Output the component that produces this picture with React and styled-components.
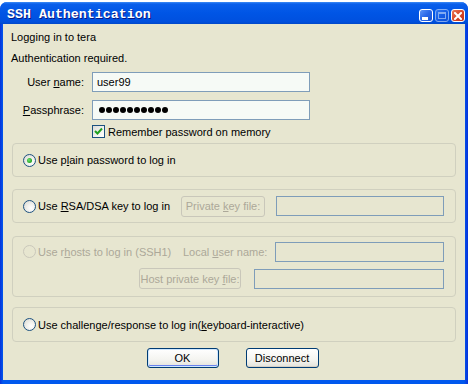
import React from 'react';
import styled, { createGlobalStyle } from 'styled-components';

const GlobalStyle = createGlobalStyle`
  html, body {
    margin: 0;
    padding: 0;
    background: #ffffff;
  }
  body {
    font-family: "Liberation Sans", Arial, sans-serif;
    font-size: 11px;
    color: #000;
  }
`;

const FACE = '#E7E6D0';
const DISABLED = '#ACA899';

const Window = styled.div`
  width: 468px;
  height: 382px;
  margin-top: 2px;
  box-sizing: border-box;
  display: flex;
  flex-direction: column;
  background: linear-gradient(to right, #0831D9 0, #0058EE 3px, #0058EE 464px, #0831D9 468px);
  border-radius: 7px 7px 0 0;
  overflow: hidden;
`;

const TitleBar = styled.div`
  height: 22px;
  flex: none;
  display: flex;
  align-items: flex-start;
  justify-content: space-between;
  padding: 0 3px 0 7px;
  background: linear-gradient(to bottom, #3D8CF5 0, #0A5FEB 2px, #0055E5 50%, #0050DE 90%, #0148C8 100%);
`;

const Title = styled.div`
  font-family: "Liberation Mono", "DejaVu Sans Mono", monospace;
  font-weight: bold;
  font-size: 13.3px;
  line-height: 16px;
  padding-top: 5px;
  color: #fff;
  text-shadow: 1px 1px 0 #0A1883;
`;

const Controls = styled.div`
  display: flex;
  gap: 2px;
  padding-top: 7px;
`;

const CapButton = styled.div`
  width: 14px;
  height: 13px;
  box-sizing: border-box;
  border: 1px solid #fff;
  border-radius: 3px;
  background: ${p => p.$close
    ? 'linear-gradient(135deg, #E97A5B 0%, #D8482A 50%, #C0341C 100%)'
    : 'linear-gradient(135deg, #5C93F8 0%, #2866E8 50%, #1B52D0 100%)'};
  opacity: ${p => (p.$disabled ? 0.5 : 1)};
  display: flex;
  align-items: center;
  justify-content: center;
`;

const Body = styled.div`
  flex: 1;
  margin: 0 3px 4px 3px;
  background: ${FACE};
  display: flex;
  flex-direction: column;
`;

const Line = styled.div`
  height: 18px;
  line-height: 18px;
  padding-left: 8px;
  margin-top: ${p => p.$top}px;
`;

const FieldRow = styled.div`
  display: flex;
  align-items: center;
  height: 20px;
  margin-top: ${p => p.$top}px;
`;

const FieldLabel = styled.div`
  width: 81px;
  margin-right: 8px;
  text-align: right;
`;

const TextBox = styled.div`
  box-sizing: border-box;
  height: 20px;
  width: ${p => (p.$w ? `${p.$w}px` : 'auto')};
  flex: ${p => (p.$w ? 'none' : '1')};
  border: 1px solid #7F9DB9;
  background: ${p => (p.$disabled ? 'transparent' : '#F6FAF6')};
  padding-left: 4px;
  line-height: 18px;
  display: flex;
  align-items: center;
`;

const Dots = styled.div`
  display: flex;
  gap: 1px;
  padding-left: 2px;
`;

const Dot = styled.span`
  width: 6px;
  height: 6px;
  border-radius: 50%;
  background: #000;
`;

const CheckRow = styled.div`
  display: flex;
  align-items: center;
  height: 13px;
  margin: 5px 0 0 89px;
  gap: 3px;
`;

const CheckBox = styled.div`
  width: 13px;
  height: 13px;
  box-sizing: border-box;
  border: 1px solid #1C5180;
  background: linear-gradient(135deg, #DCDCD7 0%, #F5F5F1 60%, #ffffff 100%);
  display: flex;
  align-items: center;
  justify-content: center;
`;

const Group = styled.div`
  box-sizing: border-box;
  margin: ${p => p.$top}px 9px 0 9px;
  height: ${p => p.$h}px;
  border: 1px solid #D0D0BF;
  border-radius: 4px;
  padding: 0 11px 0 10px;
  display: flex;
  align-items: center;
`;

const StackGroup = styled(Group)`
  flex-direction: column;
  align-items: stretch;
  justify-content: flex-start;
  padding-top: 4px;
  gap: 6px;
`;

const GroupRow = styled.div`
  display: flex;
  align-items: center;
  justify-content: ${p => (p.$end ? 'flex-end' : 'flex-start')};
  height: 21px;
  gap: ${p => p.$gap || 0}px;
  width: 100%;
`;

const Option = styled.div`
  display: flex;
  align-items: center;
  gap: 2px;
  width: ${p => (p.$w ? `${p.$w}px` : 'auto')};
  flex: none;
  color: ${p => (p.$disabled ? DISABLED : '#000')};
`;

const Radio = styled.div`
  width: 13px;
  height: 13px;
  box-sizing: border-box;
  border-radius: 50%;
  border: 1px solid ${p => (p.$disabled ? '#CAC8BB' : '#1C5180')};
  background: ${p => (p.$disabled
    ? 'transparent'
    : 'radial-gradient(circle at 65% 65%, #ffffff 0%, #F1F1ED 40%, #D4D4CC 100%)')};
  display: flex;
  align-items: center;
  justify-content: center;
  flex: none;
`;

const RadioDot = styled.div`
  width: 5px;
  height: 5px;
  border-radius: 50%;
  background: radial-gradient(circle at 40% 40%, #6EE66E 0%, #21A121 70%);
`;

const Caption = styled.div`
  width: ${p => p.$w}px;
  flex: none;
  color: ${DISABLED};
`;

const Spacer = styled.span`
  width: ${p => p.$w}px;
  flex: none;
`;

const FlatButton = styled.div`
  box-sizing: border-box;
  width: ${p => p.$w}px;
  height: 21px;
  flex: none;
  border: 1px solid #C9C7BA;
  border-radius: 3px;
  color: ${DISABLED};
  display: flex;
  align-items: center;
  justify-content: center;
  white-space: nowrap;
  overflow: hidden;
`;

const ButtonRow = styled.div`
  display: flex;
  justify-content: center;
  gap: 27px;
  margin-top: 6px;
  margin-left: -3px;
`;

const PushButton = styled.div`
  box-sizing: border-box;
  width: ${p => p.$w}px;
  height: 20px;
  border: 1px solid #003C74;
  border-radius: 3px;
  background: linear-gradient(to bottom, #ffffff 0%, #F4F4F0 60%, #E3E2DA 100%);
  box-shadow: ${p => (p.$default
    ? 'inset 0 0 0 1px #CEE7FF, inset 0 -1px 0 1px #6982EE'
    : 'inset 0 -1px 0 #D6D0C5')};
  display: flex;
  align-items: center;
  justify-content: center;
`;

const Ul = styled.span`
  text-decoration: underline;
  text-underline-offset: 1px;
`;

export default function App() {
  return (
    <>
      <GlobalStyle />
      <Window>
        <TitleBar>
          <Title>SSH Authentication</Title>
          <Controls>
            <CapButton>
              <svg width="6" height="3" viewBox="0 0 6 3" style={{ marginTop: 5, marginRight: 2 }}>
                <rect width="6" height="3" fill="#fff" />
              </svg>
            </CapButton>
            <CapButton $disabled>
              <svg width="8" height="7" viewBox="0 0 8 7">
                <rect x="0.5" y="0.5" width="7" height="6" fill="none" stroke="#fff" />
                <rect x="0" y="0" width="8" height="2" fill="#fff" />
              </svg>
            </CapButton>
            <CapButton $close>
              <svg width="8" height="8" viewBox="0 0 8 8">
                <path d="M1 1 L7 7 M7 1 L1 7" stroke="#fff" strokeWidth="2" strokeLinecap="square" />
              </svg>
            </CapButton>
          </Controls>
        </TitleBar>
        <Body>
          <Line $top={4}>Logging in to tera</Line>
          <Line $top={3}>Authentication required.</Line>
          <FieldRow $top={5}>
            <FieldLabel>User <Ul>n</Ul>ame:</FieldLabel>
            <TextBox $w={218}>user99</TextBox>
          </FieldRow>
          <FieldRow $top={8}>
            <FieldLabel><Ul>P</Ul>assphrase:</FieldLabel>
            <TextBox $w={218}>
              <Dots>
                {Array.from({ length: 10 }).map((_, i) => <Dot key={i} />)}
              </Dots>
            </TextBox>
          </FieldRow>
          <CheckRow>
            <CheckBox>
              <svg width="9" height="9" viewBox="0 0 9 9">
                <path d="M1 4 L3.5 6.5 L8 1.5" fill="none" stroke="#21A121" strokeWidth="2" />
              </svg>
            </CheckBox>
            <span>Remember password on memory</span>
          </CheckRow>

          <Group $top={5} $h={34}>
            <Option>
              <Radio><RadioDot /></Radio>
              <span>Use p<Ul>l</Ul>ain password to log in</span>
            </Option>
          </Group>

          <Group $top={12} $h={34}>
            <GroupRow>
              <Option $w={158}>
                <Radio />
                <span>Use <Ul>R</Ul>SA/DSA key to log in</span>
              </Option>
              <FlatButton $w={84}><span>Private <Ul>k</Ul>ey file:</span></FlatButton>
              <Spacer $w={11} />
              <TextBox $disabled />
            </GroupRow>
          </Group>

          <StackGroup $top={13} $h={61}>
            <GroupRow>
              <Option $w={160} $disabled>
                <Radio $disabled />
                <span>Use r<Ul>h</Ul>osts to log in (SSH1)</span>
              </Option>
              <Caption $w={92}>Local <Ul>u</Ul>ser name:</Caption>
              <TextBox $disabled />
            </GroupRow>
            <GroupRow $end $gap={13}>
              <FlatButton $w={102}><span>Host private key <Ul>f</Ul>ile:</span></FlatButton>
              <TextBox $disabled $w={190} />
            </GroupRow>
          </StackGroup>

          <Group $top={10} $h={35}>
            <Option>
              <Radio />
              <span>Use challenge/response to log in(<Ul>k</Ul>eyboard-interactive)</span>
            </Option>
          </Group>

          <ButtonRow>
            <PushButton $w={72} $default>OK</PushButton>
            <PushButton $w={73}>Disconnect</PushButton>
          </ButtonRow>
        </Body>
      </Window>
    </>
  );
}
